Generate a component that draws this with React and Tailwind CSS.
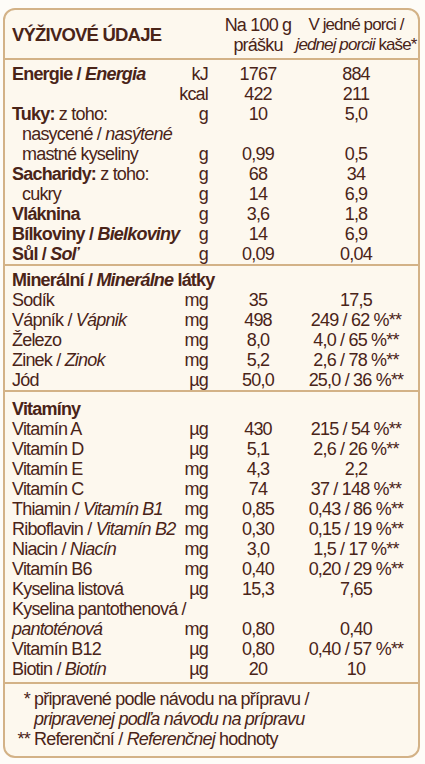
const font = { fontFamily: '"Liberation Sans", Arial, sans-serif' }

function Row({ label, unit, a, b, indent }) {
  return (
    <div className="grid grid-cols-[minmax(0,1fr)_30px_100px_96px] leading-[20px]">
      <div className={'whitespace-nowrap ' + (indent ? 'pl-[10px]' : '')}>{label}</div>
      <div className="text-right">{unit}</div>
      <div className="flex justify-center whitespace-nowrap">{a}</div>
      <div className="flex justify-center whitespace-nowrap">{b}</div>
    </div>
  )
}

const I = ({ children }) => <i>{children}</i>
const B = ({ children }) => <b className="font-bold">{children}</b>

export default function App() {
  return (
    <div className="min-h-[764px] bg-[#fefcf8] pt-[8px] pl-[3px] pr-[5px] text-[#4a2418] text-[18px] tracking-[-0.8px]" style={font}>
      <div className="rounded-[12px] border-2 border-[#d3b287] bg-[#fdf8ee] h-[750px] overflow-hidden">
        {/* header */}
        <div className="grid grid-cols-[minmax(0,1fr)_30px_100px_96px] pl-[7px] pr-[14px] pt-[5px] pb-[3px] leading-[20px] border-b-2 border-[#d3b287]">
          <div className="self-center font-bold text-[18.5px] whitespace-nowrap">VÝŽIVOVÉ ÚDAJE</div>
          <div />
          <div className="flex flex-col items-center whitespace-nowrap">
            <span>Na 100 g</span>
            <span>prášku</span>
          </div>
          <div className="flex flex-col items-center whitespace-nowrap text-[17px] tracking-[-0.9px]">
            <span>V jedné porci /</span>
            <span><I>jednej porcii</I> kaše*</span>
          </div>
        </div>

        {/* makroživiny */}
        <div className="pl-[7px] pr-[14px] pt-[4px] border-b-2 border-[#d3b287]">
          <Row label={<B>Energie / <I>Energia</I></B>} unit="kJ" a="1767" b="884" />
          <Row label="" unit="kcal" a="422" b="211" />
          <Row label={<><B>Tuky:</B> z toho:</>} unit="g" a="10" b="5,0" />
          <Row indent label={<>nasycené / <I>nasýtené</I></>} />
          <Row indent label="mastné kyseliny" unit="g" a="0,99" b="0,5" />
          <Row label={<><B>Sacharidy:</B> z toho:</>} unit="g" a="68" b="34" />
          <Row indent label="cukry" unit="g" a="14" b="6,9" />
          <Row label={<B>Vláknina</B>} unit="g" a="3,6" b="1,8" />
          <Row label={<B>Bílkoviny / <I>Bielkoviny</I></B>} unit="g" a="14" b="6,9" />
          <Row label={<B>Sůl / <I>Soľ</I></B>} unit="g" a="0,09" b="0,04" />
        </div>

        {/* minerální látky */}
        <div className="pl-[7px] pr-[14px] pt-[4px] border-b-2 border-[#d3b287]">
          <Row label={<B>Minerální / <I>Minerálne</I> látky</B>} />
          <Row label="Sodík" unit="mg" a="35" b="17,5" />
          <Row label={<>Vápník / <I>Vápnik</I></>} unit="mg" a="498" b="249 / 62 %**" />
          <Row label="Železo" unit="mg" a="8,0" b="4,0 / 65 %**" />
          <Row label={<>Zinek / <I>Zinok</I></>} unit="mg" a="5,2" b="2,6 / 78 %**" />
          <Row label="Jód" unit="µg" a="50,0" b="25,0 / 36 %**" />
        </div>

        {/* vitamíny */}
        <div className="pl-[7px] pr-[14px] pt-[7px] pb-[3px] border-b-2 border-[#d3b287]">
          <Row label={<B>Vitamíny</B>} />
          <Row label="Vitamín A" unit="µg" a="430" b="215 / 54 %**" />
          <Row label="Vitamín D" unit="µg" a="5,1" b="2,6 / 26 %**" />
          <Row label="Vitamín E" unit="mg" a="4,3" b="2,2" />
          <Row label="Vitamín C" unit="mg" a="74" b="37 / 148 %**" />
          <Row label={<>Thiamin / <I>Vitamín B1</I></>} unit="mg" a="0,85" b="0,43 / 86 %**" />
          <Row label={<>Riboflavin / <I>Vitamín B2</I></>} unit="mg" a="0,30" b="0,15 / 19 %**" />
          <Row label={<>Niacin / <I>Niacín</I></>} unit="mg" a="3,0" b="1,5 / 17 %**" />
          <Row label="Vitamín B6" unit="mg" a="0,40" b="0,20 / 29 %**" />
          <Row label="Kyselina listová" unit="µg" a="15,3" b="7,65" />
          <Row label="Kyselina pantothenová /" />
          <Row label={<I>pantoténová</I>} unit="mg" a="0,80" b="0,40" />
          <Row label="Vitamín B12" unit="µg" a="0,80" b="0,40 / 57 %**" />
          <Row label={<>Biotin / <I>Biotín</I></>} unit="µg" a="20" b="10" />
        </div>

        {/* poznámky */}
        <div className="grid grid-cols-[16px_1fr] gap-x-[4px] pl-[9px] pt-[5px] leading-[20px]">
          <div className="text-right">*</div>
          <div>připravené podle návodu na přípravu /</div>
          <div />
          <div><I>pripravenej podľa návodu na prípravu</I></div>
          <div className="text-right">**</div>
          <div>Referenční / <I>Referenčnej</I> hodnoty</div>
        </div>
      </div>
    </div>
  )
}
